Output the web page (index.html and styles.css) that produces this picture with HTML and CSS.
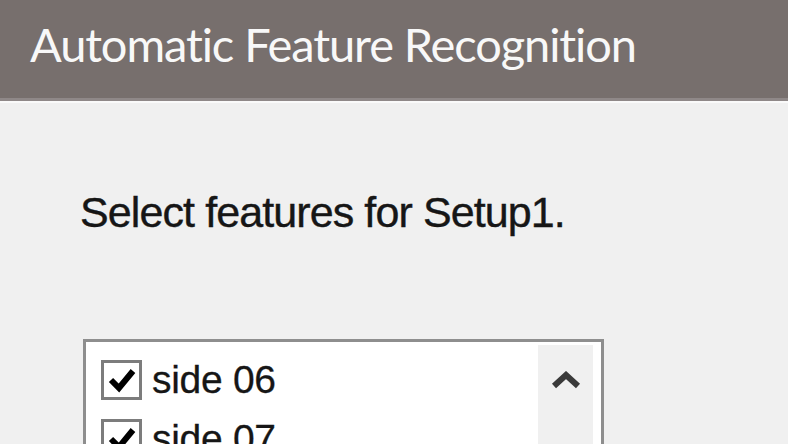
FILE: index.html
```html
<!DOCTYPE html>
<html>
<head>
<meta charset="utf-8">
<link rel="stylesheet" href="styles.css">
</head>
<body>
<div class="dialog">
  <header class="titlebar"><span class="title">Automatic Feature Recognition</span></header>
  <div class="divider"></div>
  <main class="content">
    <p class="prompt">Select features for Setup1.</p>
    <div class="listbox">
      <ul class="items">
        <li class="item">
          <span class="checkbox"><svg viewBox="0 0 34 34" width="34" height="34"><path d="M6 17 L14 25 L28 8" fill="none" stroke="#000" stroke-width="6"/></svg></span>
          <span class="label">side 06</span>
        </li>
        <li class="item">
          <span class="checkbox"><svg viewBox="0 0 34 34" width="34" height="34"><path d="M6 17 L14 25 L28 8" fill="none" stroke="#000" stroke-width="6"/></svg></span>
          <span class="label">side 07</span>
        </li>
      </ul>
      <div class="scrollbar">
        <svg class="arrow" viewBox="0 0 32 18" width="32" height="18"><path d="M4 15 L16 4 L28 15" fill="none" stroke="#3a3a3a" stroke-width="6"/></svg>
      </div>
    </div>
  </main>
</div>
</body>
</html>
```

FILE: styles.css
```css
* { box-sizing: border-box; }
html, body { margin: 0; padding: 0; }
body { width: 788px; height: 444px; overflow: hidden; background: #f0f0f0; }
.dialog { display: flex; flex-direction: column; height: 444px; overflow: hidden; }
.titlebar {
  flex-shrink: 0;
  height: 98px;
  background: #776f6d;
  padding: 15px 0 0 30px;
}
.title {
  font-family: "Lato", "Open Sans", sans-serif;
  font-size: 47px;
  letter-spacing: -1.1px;
  font-variant-ligatures: none;
  line-height: 58px;
  color: #f8f8f8;
}
.divider { flex-shrink: 0; height: 5px; background: #8f8888; border-bottom: 2px solid #fafafa; }
.content { flex: 1; min-height: 0; overflow: hidden; padding: 0 0 0 80px; background: #f0f0f0; }
.prompt {
  margin: 84px 0 0 0;
  font-family: "Liberation Sans", Arial, sans-serif;
  font-size: 43px;
  letter-spacing: -0.9px;
  line-height: 50px;
  color: #161616;
  -webkit-text-stroke: 0.4px #161616;
}
.listbox {
  margin: 102px 0 0 3px;
  width: 521px;
  height: 200px;
  border: 3px solid #8e8e8e;
  background: #fff;
  display: flex;
  padding: 3px 8px 0 0;
}
.items { list-style: none; margin: 0; padding: 5px 0 0 15px; flex: 1; }
.item { display: flex; align-items: center; height: 59px; gap: 10px; }
.checkbox {
  width: 41px; height: 40px;
  border: 3px solid #7c7c7c;
  background: #fff;
  display: flex; align-items: center; justify-content: center;
}
.label {
  font-family: "Liberation Sans", Arial, sans-serif;
  font-size: 39px;
  color: #161616;
  letter-spacing: -0.3px;
  -webkit-text-stroke: 0.3px #161616;
}
.scrollbar {
  width: 55px;
  background: #f0f0f0;
  display: flex; flex-direction: column; align-items: center;
  padding-top: 26px;
}
```
